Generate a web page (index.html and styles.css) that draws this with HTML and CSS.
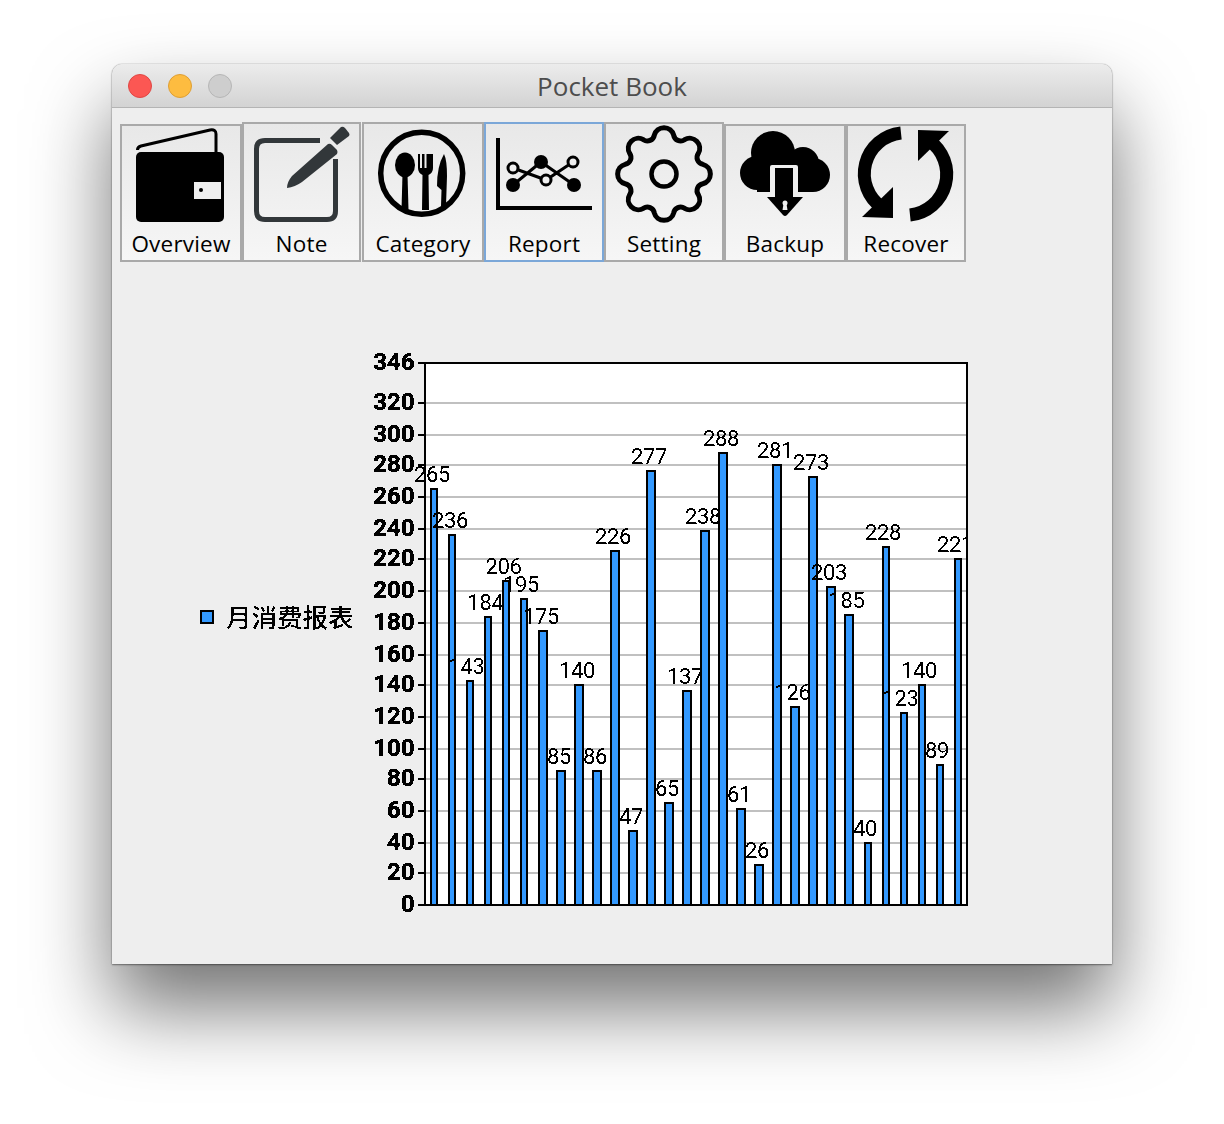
FILE: index.html
```html
<!DOCTYPE html>
<html>
   <head>
      <meta charset="UTF-8">
      <title>Pocket Book</title>
      <link rel="stylesheet" href="styles.css">
   </head>
   <body>
      <div class="window">
         <div class="title-bar">
            <div class="lights">
               <span class="light light-red"></span>
               <span class="light light-yellow"></span>
               <span class="light light-gray"></span>
            </div>
            <span class="title">Pocket Book</span>
         </div>
         <div class="toolbar">
            <div class="tool tool-wide tool-low">
               <svg class="tool-icon" viewBox="0 0 96 96">
                  <path d="M4.5 24 Q4.5 21 8 20 L77 4 Q83 3 83 8 V27" fill="none" stroke="#000" stroke-width="3"/>
                  <rect x="3" y="26" width="88" height="70" rx="5" fill="#000"/>
                  <rect x="61" y="56" width="27" height="17" fill="#efefef"/>
                  <circle cx="68" cy="64" r="2" fill="#000"/>
               </svg>
               <span class="tool-label">Overview</span>
            </div>
            <div class="tool tool-note">
               <svg class="tool-icon" viewBox="0 0 96 96">
                  <path d="M66 14.5 H11 Q2.5 14.5 2.5 23 V85 Q2.5 93.5 11 93.5 H73 Q81.5 93.5 81.5 85 V33" fill="none" stroke="#32373a" stroke-width="5"/>
                  <path d="M33 62 Q33 56 38 50 L74 18 Q76 17 78 19 L83 24 Q84 26 83 28 L48 56 Q41 61 33 62 Z" fill="#32373a"/>
                  <path d="M76 12 L87 1 Q89 0 91 2 L95 7 Q96 9 95 10 L83 19 Z" fill="#32373a"/>
               </svg>
               <span class="tool-label">Note</span>
            </div>
            <div class="tool tool-wide">
               <svg class="tool-icon" viewBox="0 0 96 96">
                  <circle cx="46.7" cy="47.3" r="41" fill="none" stroke="#000" stroke-width="5.5"/>
                  <ellipse cx="30" cy="39" rx="10" ry="12.5" fill="#000"/>
                  <path d="M27.5 48 H32.5 L33.5 84 H26.5 Z" fill="#000"/>
                  <path d="M43 28 H45 V42 H47 V28 H49.5 V42 H51.5 V28 H58 V42 Q58 47 53.5 49 L54 84 H47 L47.5 49 Q43 47 43 42 Z" fill="#000"/>
                  <path d="M69 28 Q72 34 72 50 L71 80 H66 L66.5 64 L62 60 Q62 40 69 28 Z" fill="#000"/>
               </svg>
               <span class="tool-label">Category</span>
            </div>
            <div class="tool tool-active">
               <svg class="tool-icon" viewBox="0 0 96 96">
                  <path d="M2 12 V82 H96" fill="none" stroke="#000" stroke-width="4"/>
                  <path d="M17 42 L50 54 L77 36 M17 59 L45 36 L78 59" fill="none" stroke="#000" stroke-width="3"/>
                  <circle cx="17" cy="59" r="7" fill="#000"/>
                  <circle cx="45" cy="36" r="7" fill="#000"/>
                  <circle cx="78" cy="59" r="7" fill="#000"/>
                  <circle cx="17" cy="42" r="5" fill="#efefef" stroke="#000" stroke-width="3"/>
                  <circle cx="50" cy="54" r="5" fill="#efefef" stroke="#000" stroke-width="3"/>
                  <circle cx="77" cy="36" r="5" fill="#efefef" stroke="#000" stroke-width="3"/>
               </svg>
               <span class="tool-label">Report</span>
            </div>
            <div class="tool">
               <svg class="tool-icon" viewBox="0 0 96 96">
                  <path d="M38.3 9.2 A10 10 0 0 1 57.7 9.2 A7 7 0 0 0 68.6 13.7 A10 10 0 0 1 82.3 27.4 A7 7 0 0 0 86.8 38.3 A10 10 0 0 1 86.8 57.7 A7 7 0 0 0 82.3 68.6 A10 10 0 0 1 68.6 82.3 A7 7 0 0 0 57.7 86.8 A10 10 0 0 1 38.3 86.8 A7 7 0 0 0 27.4 82.3 A10 10 0 0 1 13.7 68.6 A7 7 0 0 0 9.2 57.7 A10 10 0 0 1 9.2 38.3 A7 7 0 0 0 13.7 27.4 A10 10 0 0 1 27.4 13.7 A7 7 0 0 0 38.3 9.2 Z" fill="none" stroke="#000" stroke-width="5"/>
                  <circle cx="48" cy="48" r="12.5" fill="none" stroke="#000" stroke-width="4.5"/>
               </svg>
               <span class="tool-label">Setting</span>
            </div>
            <div class="tool tool-wide tool-low">
               <svg class="tool-icon" viewBox="0 0 96 96">
                  <circle cx="36" cy="27" r="22" fill="#000"/>
                  <circle cx="66" cy="37" r="16" fill="#000"/>
                  <circle cx="76" cy="49" r="17" fill="#000"/>
                  <circle cx="20" cy="47" r="17" fill="#000"/>
                  <rect x="20" y="44" width="56" height="22" fill="#000"/>
                  <rect x="33" y="39" width="28" height="30" rx="2" fill="#efefef"/>
                  <rect x="38" y="42" width="18" height="30" fill="#000"/>
                  <path d="M30 71 H66 L50 89 Q48 91 46 89 Z" fill="#000"/>
                  <circle cx="48" cy="77" r="2.5" fill="#efefef"/>
                  <path d="M46.5 78 H49.5 L50.5 84 H45.5 Z" fill="#efefef"/>
               </svg>
               <span class="tool-label">Backup</span>
            </div>
            <div class="tool tool-low">
               <svg class="tool-icon" viewBox="0 0 96 96">
                  <path d="M43 7 A41 41 0 0 0 24 81.5" fill="none" stroke="#000" stroke-width="13"/>
                  <path d="M35 61 V92 L4 91 Z" fill="#000"/>
                  <g transform="rotate(180 47.5 48)">
                     <path d="M43 7 A41 41 0 0 0 24 81.5" fill="none" stroke="#000" stroke-width="13"/>
                     <path d="M35 61 V92 L4 91 Z" fill="#000"/>
                  </g>
               </svg>
               <span class="tool-label">Recover</span>
            </div>
         </div>
         <svg class="chart" viewBox="112 262 1000 702">
            <defs>
               <filter id="jagged" x="-5%" y="-5%" width="110%" height="110%">
                  <feComponentTransfer>
                     <feFuncA type="discrete" tableValues="0 1"/>
                  </feComponentTransfer>
               </filter>
               <clipPath id="plot-clip"><rect x="412" y="364" width="554" height="540"/></clipPath>
            </defs>

            <!-- legend -->
            <rect class="bar" x="201" y="611" width="12" height="12"/>
            <text class="legend-text" x="226" y="627" filter="url(#jagged)">月消费报表</text>

            <!-- plot -->
            <rect class="plot" x="425" y="363" width="542" height="542"/>
            <g class="grid">
               <rect x="426" y="402" width="540" height="2"/>
               <rect x="426" y="434" width="540" height="2"/>
               <rect x="426" y="464" width="540" height="2"/>
               <rect x="426" y="496" width="540" height="2"/>
               <rect x="426" y="528" width="540" height="2"/>
               <rect x="426" y="558" width="540" height="2"/>
               <rect x="426" y="590" width="540" height="2"/>
               <rect x="426" y="622" width="540" height="2"/>
               <rect x="426" y="654" width="540" height="2"/>
               <rect x="426" y="684" width="540" height="2"/>
               <rect x="426" y="716" width="540" height="2"/>
               <rect x="426" y="748" width="540" height="2"/>
               <rect x="426" y="778" width="540" height="2"/>
               <rect x="426" y="810" width="540" height="2"/>
               <rect x="426" y="842" width="540" height="2"/>
               <rect x="426" y="872" width="540" height="2"/>
            </g>
            <g class="ticks">
               <rect x="418" y="362" width="6" height="2"/>
               <rect x="418" y="402" width="6" height="2"/>
               <rect x="418" y="434" width="6" height="2"/>
               <rect x="418" y="464" width="6" height="2"/>
               <rect x="418" y="496" width="6" height="2"/>
               <rect x="418" y="528" width="6" height="2"/>
               <rect x="418" y="558" width="6" height="2"/>
               <rect x="418" y="590" width="6" height="2"/>
               <rect x="418" y="622" width="6" height="2"/>
               <rect x="418" y="654" width="6" height="2"/>
               <rect x="418" y="684" width="6" height="2"/>
               <rect x="418" y="716" width="6" height="2"/>
               <rect x="418" y="748" width="6" height="2"/>
               <rect x="418" y="778" width="6" height="2"/>
               <rect x="418" y="810" width="6" height="2"/>
               <rect x="418" y="842" width="6" height="2"/>
               <rect x="418" y="872" width="6" height="2"/>
               <rect x="418" y="904" width="6" height="2"/>
            </g>
            <g class="axis-text" filter="url(#jagged)">
               <text x="414.5" y="370">346</text>
               <text x="414.5" y="410">320</text>
               <text x="414.5" y="442">300</text>
               <text x="414.5" y="472">280</text>
               <text x="414.5" y="504">260</text>
               <text x="414.5" y="536">240</text>
               <text x="414.5" y="566">220</text>
               <text x="414.5" y="598">200</text>
               <text x="414.5" y="630">180</text>
               <text x="414.5" y="662">160</text>
               <text x="414.5" y="692">140</text>
               <text x="414.5" y="724">120</text>
               <text x="414.5" y="756">100</text>
               <text x="414.5" y="786">80</text>
               <text x="414.5" y="818">60</text>
               <text x="414.5" y="850">40</text>
               <text x="414.5" y="880">20</text>
               <text x="414.5" y="912">0</text>
            </g>

            <!-- bars -->
            <rect class="bar" x="431" y="489" width="6" height="416"/>
            <rect class="bar" x="449" y="535" width="6" height="370"/>
            <rect class="bar" x="467" y="681" width="6" height="224"/>
            <rect class="bar" x="485" y="617" width="6" height="288"/>
            <rect class="bar" x="503" y="581" width="6" height="324"/>
            <rect class="bar" x="521" y="599" width="6" height="306"/>
            <rect class="bar" x="539" y="631" width="8" height="274"/>
            <rect class="bar" x="557" y="771" width="8" height="134"/>
            <rect class="bar" x="575" y="685" width="8" height="220"/>
            <rect class="bar" x="593" y="771" width="8" height="134"/>
            <rect class="bar" x="611" y="551" width="8" height="354"/>
            <rect class="bar" x="629" y="831" width="8" height="74"/>
            <rect class="bar" x="647" y="471" width="8" height="434"/>
            <rect class="bar" x="665" y="803" width="8" height="102"/>
            <rect class="bar" x="683" y="691" width="8" height="214"/>
            <rect class="bar" x="701" y="531" width="8" height="374"/>
            <rect class="bar" x="719" y="453" width="8" height="452"/>
            <rect class="bar" x="737" y="809" width="8" height="96"/>
            <rect class="bar" x="755" y="865" width="8" height="40"/>
            <rect class="bar" x="773" y="465" width="8" height="440"/>
            <rect class="bar" x="791" y="707" width="8" height="198"/>
            <rect class="bar" x="809" y="477" width="8" height="428"/>
            <rect class="bar" x="827" y="587" width="8" height="318"/>
            <rect class="bar" x="845" y="615" width="8" height="290"/>
            <rect class="bar" x="865" y="843" width="6" height="62"/>
            <rect class="bar" x="883" y="547" width="6" height="358"/>
            <rect class="bar" x="901" y="713" width="6" height="192"/>
            <rect class="bar" x="919" y="685" width="6" height="220"/>
            <rect class="bar" x="937" y="765" width="6" height="140"/>
            <rect class="bar" x="955" y="559" width="6" height="346"/>

            <!-- bar values -->
            <g class="value-text" filter="url(#jagged)">
               <text x="432" y="482">265</text>
               <text x="450" y="528">236</text>
               <text x="466.5" y="674">143</text>
               <text x="485.5" y="610">184</text>
               <text x="503.5" y="574">206</text>
               <text x="521" y="592">195</text>
               <text x="541" y="624">175</text>
               <text x="559" y="764">85</text>
               <text x="577" y="678">140</text>
               <text x="595" y="764">86</text>
               <text x="613" y="544">226</text>
               <text x="631" y="824">47</text>
               <text x="649" y="464">277</text>
               <text x="667" y="796">65</text>
               <text x="685" y="684">137</text>
               <text x="703" y="524">238</text>
               <text x="721" y="446">288</text>
               <text x="739" y="802">61</text>
               <text x="757" y="858">26</text>
               <text x="775" y="458">281</text>
               <text x="792.5" y="700">126</text>
               <text x="811" y="470">273</text>
               <text x="829" y="580">203</text>
               <text x="846.5" y="608">185</text>
               <text x="865" y="836">40</text>
               <text x="883" y="540">228</text>
               <text x="900.5" y="706">123</text>
               <text x="919" y="678">140</text>
               <text x="937" y="758">89</text>
               <text x="955" y="552" clip-path="url(#plot-clip)">221</text>
            </g>
         </svg>
      </div>
   </body>
</html>
```
FILE: styles.css
```css
body {
   margin: 0;
   padding: 64px 0 160px 112px;
   background-color: white;
}
.window {
   width: 1000px;
   height: 900px;
   background-color: #eeeeee;
   border-radius: 10px 10px 0 0;
   box-shadow: 0 0 1px rgba(0, 0, 0, 0.6), 0 1px 2px rgba(0, 0, 0, 0.4), 0 44px 80px rgba(0, 0, 0, 0.55);
}
.title-bar {
   display: flex;
   align-items: center;
   justify-content: center;
   position: relative;
   height: 43px;
   background: linear-gradient(#ececec, #d3d3d3);
   border-bottom: 1px solid #b4b4b4;
   border-radius: 10px 10px 0 0;
}
.lights {
   position: absolute;
   left: 16px;
   top: 10px;
   display: flex;
   gap: 16px;
}
.light {
   width: 22px;
   height: 22px;
   border: 1px solid;
   border-radius: 50%;
}
.light-red {
   background-color: #fc5753;
   border-color: #df4744;
}
.light-yellow {
   background-color: #fdbc40;
   border-color: #de9f34;
}
.light-gray {
   background-color: #cecece;
   border-color: #b6b6b6;
}
.title {
   font-family: "Open Sans", sans-serif;
   font-size: 26px;
   color: #4d4d4d;
}
.toolbar {
   display: flex;
   align-items: flex-end;
   height: 140px;
   margin: 14px 0 0 8px;
}
.tool {
   display: flex;
   flex-direction: column;
   align-items: center;
   justify-content: flex-end;
   box-sizing: border-box;
   width: 120px;
   height: 140px;
   border: 2px solid #a9a9a9;
   background: linear-gradient(#e8e8e8, #f6f6f6);
}
.tool-wide {
   width: 122px;
}
.tool-low {
   height: 138px;
}
.tool-note {
   width: 119px;
   margin-right: 1px;
}
.tool-active {
   border-color: #7ba7d8;
}
.tool-icon {
   width: 96px;
   height: 96px;
   overflow: visible;
}
.tool-label {
   height: 38px;
   font-family: "Open Sans", sans-serif;
   font-size: 22.5px;
   letter-spacing: 0.2px;
   line-height: 44px;
   color: black;
}
.chart {
   display: block;
   width: 1000px;
   height: 702px;
}
.plot {
   fill: white;
   stroke: black;
   stroke-width: 2;
}
.grid rect {
   fill: #c0c0c0;
}
.ticks rect {
   fill: black;
}
.bar {
   fill: #3399ff;
   stroke: black;
   stroke-width: 2;
}
.legend-text {
   font-family: "Noto Sans CJK SC", sans-serif;
   font-size: 25.5px;
   font-weight: 500;
   fill: black;
}
.axis-text {
   font-family: Roboto, "Liberation Sans", sans-serif;
   font-size: 24px;
   font-weight: bold;
   text-anchor: end;
   fill: black;
   stroke: black;
   stroke-width: 0.4;
}
.value-text {
   font-family: Roboto, "Liberation Sans", sans-serif;
   font-size: 22px;
   letter-spacing: -0.3px;
   text-anchor: middle;
   fill: black;
}
```
